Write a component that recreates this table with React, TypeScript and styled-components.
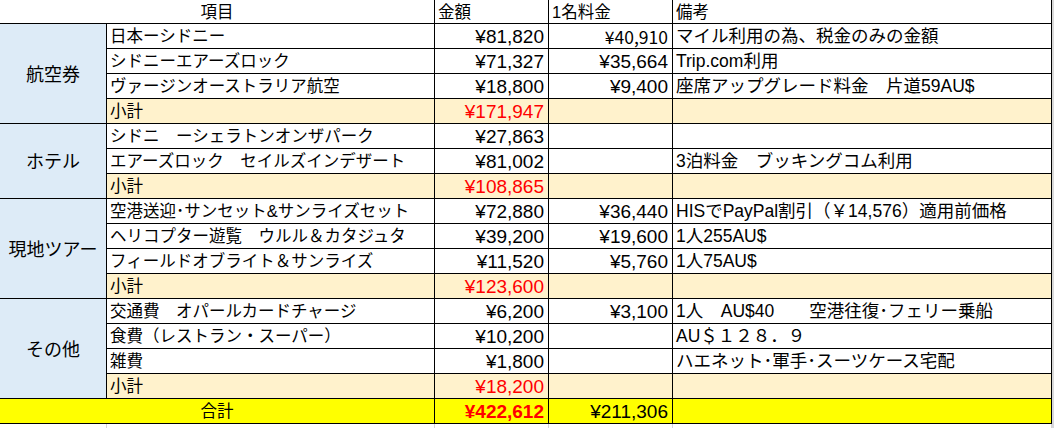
import React from "react";
import styled, { createGlobalStyle } from "styled-components";

const GlobalStyle = createGlobalStyle`
  html, body {
    margin: 0;
    padding: 0;
    background: #fff;
  }
  body {
    font-family: "Liberation Sans", "Noto Sans CJK JP", sans-serif;
    color: #000;
  }
`;

type Tone = "plain" | "category" | "subtotal" | "total";

const toneBg: Record<Tone, string> = {
  plain: "#ffffff",
  category: "#ddebf7",
  subtotal: "#fff2cc",
  total: "#ffff00",
};

const Sheet = styled.div`
  display: flex;
  width: 1054px;
  height: 428px;
  overflow: hidden;
  background: #fff;
`;

const Edge = styled.div`
  width: 2px;
  background: #d9d9d9;
`;

const Table = styled.table`
  border-collapse: separate;
  border-spacing: 0;
  table-layout: fixed;
  width: 1052px;
  font-family: "Liberation Sans", "Noto Sans CJK JP", sans-serif;
`;

const Row = styled.tr<{ $h: number }>`
  height: ${(p) => p.$h}px;
`;

const Head = styled.th<{ $center?: boolean }>`
  box-sizing: border-box;
  padding: 0 3px;
  border-right: 1px solid #000;
  border-bottom: 1px solid #000;
  font-weight: normal;
  font-size: 16.5px;
  line-height: 22px;
  text-align: ${(p) => (p.$center ? "center" : "left")};
  vertical-align: bottom;
  white-space: nowrap;
`;

const Category = styled.td`
  box-sizing: border-box;
  border-right: 1px solid #000;
  border-bottom: 1px solid #000;
  background: ${toneBg.category};
  font-size: 18px;
  text-align: center;
  vertical-align: middle;
  padding: 0 0 2px;
`;

const Text = styled.td<{ $tone?: Tone; $center?: boolean; $note?: boolean }>`
  box-sizing: border-box;
  border-right: 1px solid #000;
  border-bottom: 1px solid #000;
  background: ${(p) => toneBg[p.$tone ?? "plain"]};
  padding: 1px 3px 0;
  font-size: ${(p) => (p.$note ? "17.5px" : "16.5px")};
  line-height: 23px;
  text-align: ${(p) => (p.$center ? "center" : "left")};
  white-space: nowrap;
  overflow: hidden;
`;

const Money = styled.td<{ $tone?: Tone; $red?: boolean; $bold?: boolean; $light?: boolean }>`
  box-sizing: border-box;
  border-right: 1px solid #000;
  border-bottom: 1px solid #000;
  background: ${(p) => toneBg[p.$tone ?? "plain"]};
  padding: 1px 4px 0 0;
  font-size: ${(p) => (p.$light ? "17.5px" : "19px")};
  font-family: ${(p) =>
    p.$light ? `"Noto Sans CJK JP", sans-serif` : `"Liberation Sans", sans-serif`};
  font-weight: ${(p) => (p.$bold ? 700 : 400)};
  color: ${(p) => (p.$red ? "#ff0000" : "#000")};
  line-height: 23px;
  text-align: right;
  white-space: nowrap;
`;

const Tail = styled.td`
  border-right: 1px solid #d4d4d4;
  padding: 0;
`;

type Item = {
  name: string;
  amount: string;
  each?: string;
  eachLight?: boolean;
  note?: string;
};

type Group = {
  label: string;
  items: Item[];
  subtotal: string;
};

const groups: Group[] = [
  {
    label: "航空券",
    subtotal: "¥171,947",
    items: [
      { name: "日本ーシドニー", amount: "¥81,820", each: "¥40,910", eachLight: true, note: "マイル利用の為、税金のみの金額" },
      { name: "シドニーエアーズロック", amount: "¥71,327", each: "¥35,664", note: "Trip.com利用" },
      { name: "ヴァージンオーストラリア航空", amount: "¥18,800", each: "¥9,400", note: "座席アップグレード料金　片道59AU$" },
    ],
  },
  {
    label: "ホテル",
    subtotal: "¥108,865",
    items: [
      { name: "シドニ　ーシェラトンオンザパーク", amount: "¥27,863" },
      { name: "エアーズロック　セイルズインデザート", amount: "¥81,002", note: "3泊料金　ブッキングコム利用" },
    ],
  },
  {
    label: "現地ツアー",
    subtotal: "¥123,600",
    items: [
      { name: "空港送迎･サンセット&サンライズセット", amount: "¥72,880", each: "¥36,440", note: "HISでPayPal割引（￥14,576）適用前価格" },
      { name: "ヘリコプター遊覧　ウルル＆カタジュタ", amount: "¥39,200", each: "¥19,600", note: "1人255AU$" },
      { name: "フィールドオブライト＆サンライズ", amount: "¥11,520", each: "¥5,760", note: "1人75AU$" },
    ],
  },
  {
    label: "その他",
    subtotal: "¥18,200",
    items: [
      { name: "交通費　オパールカードチャージ", amount: "¥6,200", each: "¥3,100", note: "1人　AU$40　　空港往復･フェリー乗船" },
      { name: "食費（レストラン・スーパー）", amount: "¥10,200", note: "AU＄１２８．９" },
      { name: "雑費", amount: "¥1,800", note: "ハエネット･軍手･スーツケース宅配" },
    ],
  },
];

function GroupRows({ group }: { group: Group }) {
  return (
    <>
      {group.items.map((item, i) => (
        <Row $h={25} key={item.name}>
          {i === 0 && <Category rowSpan={group.items.length + 1}>{group.label}</Category>}
          <Text>{item.name}</Text>
          <Money>{item.amount}</Money>
          <Money $light={item.eachLight}>{item.each}</Money>
          <Text $note>{item.note}</Text>
        </Row>
      ))}
      <Row $h={25}>
        <Text $tone="subtotal">小計</Text>
        <Money $tone="subtotal" $red>
          {group.subtotal}
        </Money>
        <Money $tone="subtotal" />
        <Text $tone="subtotal" $note />
      </Row>
    </>
  );
}

export default function App() {
  return (
    <>
      <GlobalStyle />
      <Sheet>
        <Table>
          <colgroup>
            <col style={{ width: 107 }} />
            <col style={{ width: 328 }} />
            <col style={{ width: 114 }} />
            <col style={{ width: 124 }} />
            <col style={{ width: 379 }} />
          </colgroup>
          <thead>
            <Row $h={24}>
              <Head colSpan={2} $center>
                項目
              </Head>
              <Head>金額</Head>
              <Head>1名料金</Head>
              <Head>備考</Head>
            </Row>
          </thead>
          <tbody>
            {groups.map((g) => (
              <GroupRows group={g} key={g.label} />
            ))}
            <Row $h={25}>
              <Text $tone="total" colSpan={2} $center>
                合計
              </Text>
              <Money $tone="total" $red $bold>
                ¥422,612
              </Money>
              <Money $tone="total">¥211,306</Money>
              <Text $tone="total" $note />
            </Row>
            <Row $h={4}>
              <Tail />
              <Tail />
              <Tail />
              <Tail />
              <Tail />
            </Row>
          </tbody>
        </Table>
        <Edge />
      </Sheet>
    </>
  );
}
